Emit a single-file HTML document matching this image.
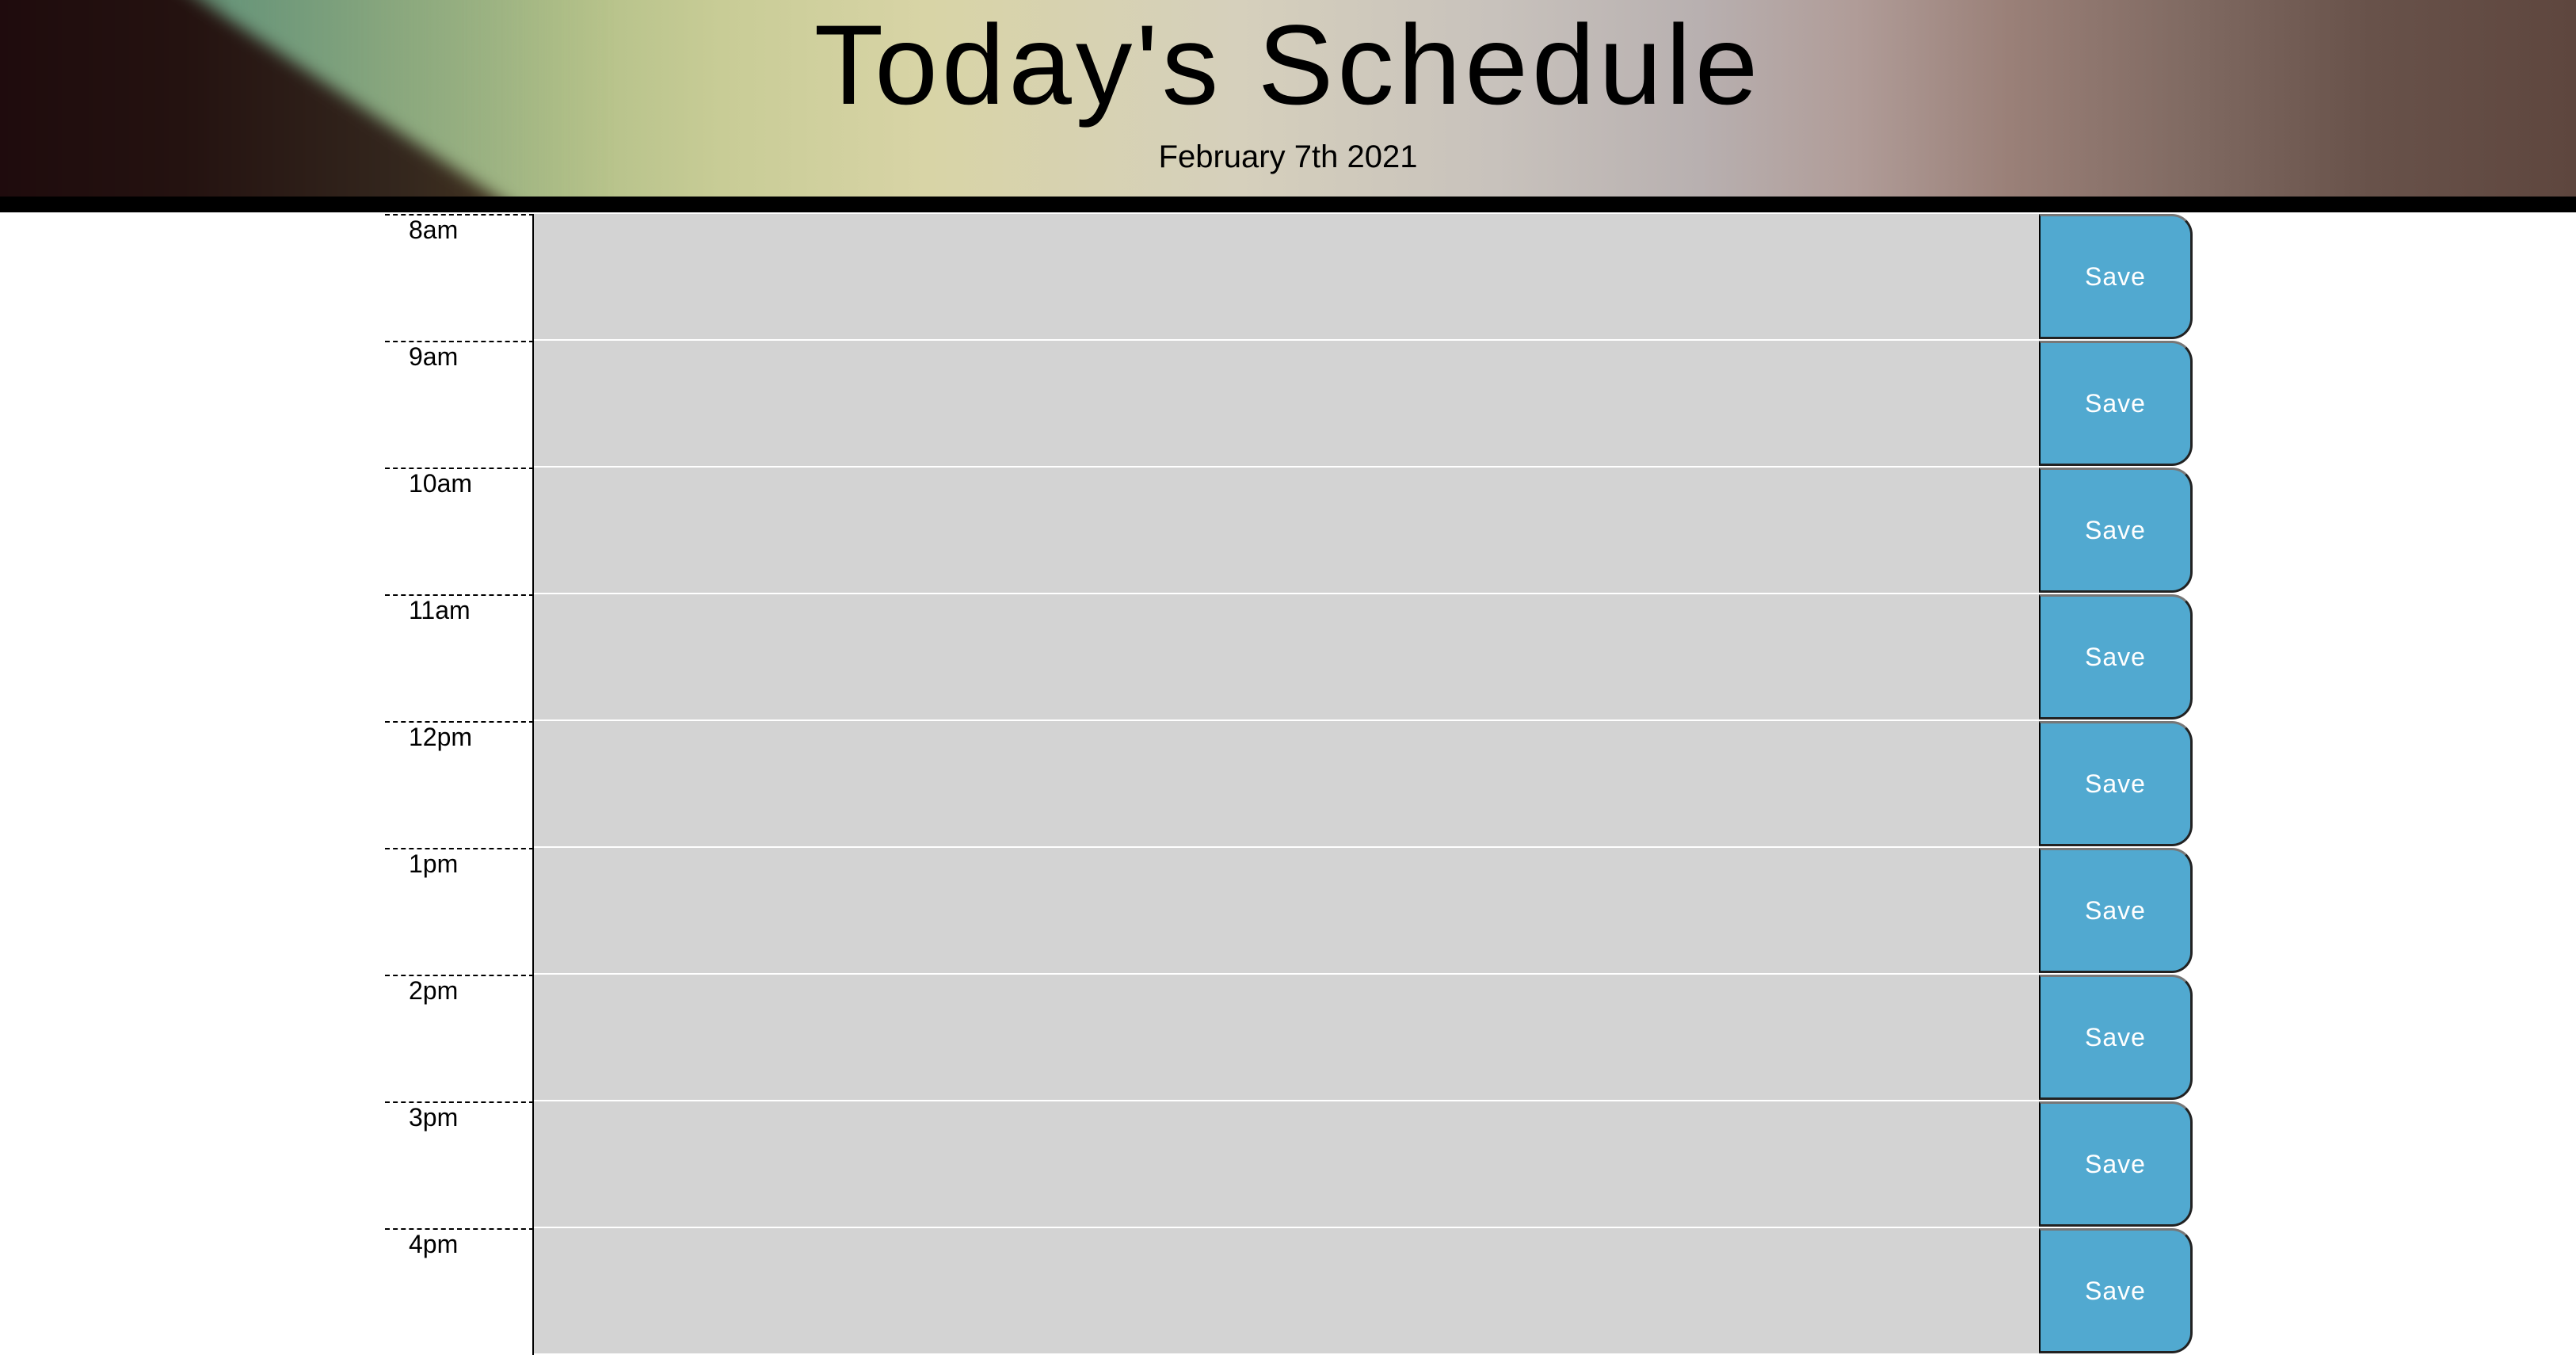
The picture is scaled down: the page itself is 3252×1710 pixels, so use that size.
<!DOCTYPE html>
<html><head><meta charset="utf-8">
<style>
*{margin:0;padding:0;box-sizing:border-box}
html,body{width:3252px;height:1708px;overflow:hidden;background:#fff;font-family:"Liberation Sans",sans-serif}
.hdr{position:absolute;left:0;top:0;width:3252px;height:248px;overflow:hidden;
background:linear-gradient(90deg,#1e0a0c 0%,#2a1512 5%,#6f9a80 9%,#90aa80 15%,#b2c088 22%,#c8cc96 28%,#d8d4a6 36%,#d6d0bc 48%,#c8c2bc 58%,#b8b0b0 66%,#b09c98 72%,#9a8078 78%,#806a62 85%,#68524a 92%,#5e463e 100%)}
.blurwrap{position:absolute;left:-40px;top:-40px;width:900px;height:340px;filter:blur(10px)}
.green{position:absolute;left:0;top:0;width:900px;height:340px;background:linear-gradient(90deg,transparent 25%,rgba(100,145,115,.55) 35%,rgba(120,160,120,.3) 60%,transparent 90%)}
.dark{position:absolute;left:0;top:0;width:900px;height:340px;
background:linear-gradient(90deg,#1e0a0c 0%,#241210 30%,#33261d 60%,#4a3a22 85%);
clip-path:polygon(0 0,232px 0,745px 340px,0 340px)}
.hdr h1{position:absolute;left:0;right:0;text-align:center;font-weight:400;font-size:143px;line-height:150px;letter-spacing:5px;color:#000;top:8px}
.hdr p{position:absolute;left:0;right:0;top:174px;text-align:center;font-size:40px;line-height:48px;color:#000}
.band{position:absolute;left:0;top:248px;width:3252px;height:20px;background:#000}
.rows{position:absolute;left:486px;top:270px;width:2282px}
.row{display:flex;height:160px}
.time{width:188px;height:160px;border-top:2px dashed #000;border-right:2px solid #000;font-size:32px;padding-left:30px;line-height:36px}
.ta{width:1900px;height:158px;background:#d3d3d3}
.btn{width:194px;height:158px;background:#51a9d0;border-left:2px solid #000;border-top:3px solid #777;border-right:3px solid #222;border-bottom:3px solid #222;border-radius:0 26px 26px 0;color:#fff;font-size:32px;display:flex;align-items:center;justify-content:center;letter-spacing:1px}
</style></head><body>
<div class="hdr"><div class="blurwrap"><div class="green"></div><div class="dark"></div></div><h1>Today's Schedule</h1><p>February 7th 2021</p></div>
<div class="band"></div>
<div class="rows">
<div class="row"><div class="time">8am</div><div class="ta"></div><div class="btn">Save</div></div>
<div class="row"><div class="time">9am</div><div class="ta"></div><div class="btn">Save</div></div>
<div class="row"><div class="time">10am</div><div class="ta"></div><div class="btn">Save</div></div>
<div class="row"><div class="time">11am</div><div class="ta"></div><div class="btn">Save</div></div>
<div class="row"><div class="time">12pm</div><div class="ta"></div><div class="btn">Save</div></div>
<div class="row"><div class="time">1pm</div><div class="ta"></div><div class="btn">Save</div></div>
<div class="row"><div class="time">2pm</div><div class="ta"></div><div class="btn">Save</div></div>
<div class="row"><div class="time">3pm</div><div class="ta"></div><div class="btn">Save</div></div>
<div class="row"><div class="time">4pm</div><div class="ta"></div><div class="btn">Save</div></div>
</div>
</body></html>
